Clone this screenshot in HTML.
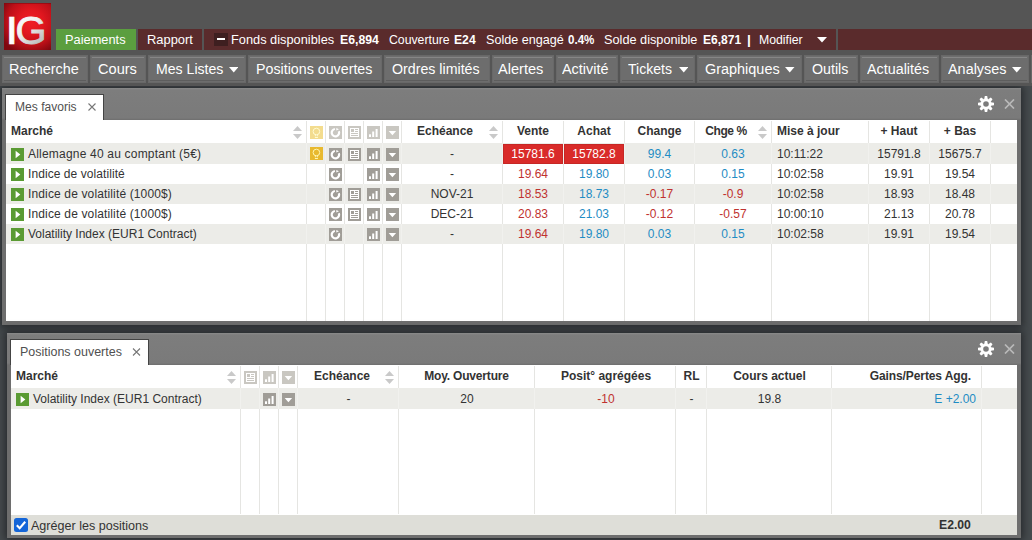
<!DOCTYPE html>
<html lang="fr">
<head>
<meta charset="utf-8">
<title>IG</title>
<style>
*{box-sizing:border-box;margin:0;padding:0}
html,body{width:1032px;height:540px;overflow:hidden}
body{position:relative;background:#464b4e;font-family:"Liberation Sans",Arial,sans-serif;font-size:12px;color:#333}
.abs{position:absolute}
#top{position:absolute;left:0;top:0;width:1032px;height:86px;background:#555;z-index:2}
#logo{position:absolute;left:4px;top:3px;width:47px;height:47px}
.acct{position:absolute;top:29px;height:21px;background:#5a2b2c;color:#fff;font-size:13px;line-height:21px;white-space:nowrap}
#pay{left:56px;width:80px;background:#5b9e3f;text-align:center}
#rap{left:138px;width:64px;text-align:center}
#funds{left:204px;width:632px}
#rest{left:838px;width:194px}
#funds span{position:absolute;top:0}
#funds b{font-weight:bold}
#minus{position:absolute;left:10px;top:4px;width:13.5px;height:13px;background:#3e1f20}
#minus i{position:absolute;left:3px;top:5px;width:8px;height:2px;background:#fff}
.nb{position:absolute;top:55px;height:28px;background:#6d6d6d;border:1px solid #686868}
.nb:before{content:"";position:absolute;left:1px;right:1px;top:1px;height:1px;background:#868686}
.nb:after{content:"";position:absolute;left:1px;right:1px;bottom:1px;height:1px;background:#5d5d5d}
.nb .ar{display:inline-block;width:0;height:0;border-left:5px solid transparent;border-right:5px solid transparent;border-top:5px solid #fff;margin-left:7px;vertical-align:2px}
.panel{position:absolute;background:linear-gradient(#8a8a8a 0,#7d7d7d 2px,#7a7a7a 30px,#6e6e6e 32px);box-shadow:0 0 8px 2px rgba(24,26,28,0.7)}
.tab{position:absolute;background:#fff;border:1px solid #444;border-bottom:none}
.tab .x{position:absolute;top:0;font-size:13px;color:#555}
.grid{position:absolute;background:#fff;overflow:hidden}
.row{position:absolute;left:0;right:0}
.alt{background:#ecece8}
.c{position:absolute;top:0;height:100%;white-space:nowrap;text-align:center;font-size:12px}
.vl{position:absolute;top:0;bottom:0;width:1px;background:#e5e5e2}
.vl2{position:absolute;top:0;bottom:0;width:1px;background:#f1f1ee}
.hd{font-weight:bold;color:#333}
.red{color:#c0322f}.blue{color:#1f8cc4}
.l{text-align:left}.r{text-align:right}
.ic{position:absolute;width:13px;height:13px}
.foot{position:absolute;left:0;right:0;background:#deded8}
</style>
</head>
<body>
<div id="top">
  <svg id="logo" viewBox="0 0 47 47">
    <defs>
      <radialGradient id="lg" cx="58%" cy="40%" r="72%">
        <stop offset="0" stop-color="#ef1d26"/><stop offset="0.35" stop-color="#e2171f"/><stop offset="0.7" stop-color="#bd1018"/><stop offset="1" stop-color="#7e070e"/>
      </radialGradient>
      <linearGradient id="lt" x1="0" y1="0" x2="0.6" y2="1"><stop offset="0" stop-color="#ffffff"/><stop offset="0.5" stop-color="#f0f0f0"/><stop offset="1" stop-color="#b4b4b4"/></linearGradient>
      <linearGradient id="li" x1="0" y1="0" x2="1" y2="0"><stop offset="0" stop-color="#c4c4c4"/><stop offset="0.3" stop-color="#ffffff"/><stop offset="1" stop-color="#f4f4f4"/></linearGradient>
    </defs>
    <rect width="47" height="47" fill="url(#lg)"/>
    <rect width="47" height="1" fill="#84080f" opacity="0.6"/>
    <text x="0" y="0" transform="translate(0.9 41.1) scale(1.25 1)" font-family="Liberation Sans, Arial, sans-serif" font-size="39" fill="url(#li)" stroke="url(#li)" stroke-width="0.4">I</text>
    <text x="0" y="0" transform="translate(11.5 41.1) scale(1.02 1)" font-family="Liberation Sans, Arial, sans-serif" font-size="39" fill="url(#lt)" stroke="url(#lt)" stroke-width="0.9">G</text>
  </svg>
<div class="acct" id="pay"><span style="position:absolute;left:9.40px;top:0px;line-height:21px;font-size:13px;font-weight:normal;white-space:pre;transform-origin:0 50%;transform:scaleX(0.9866);color:#fff;">Paiements</span></div>
<div class="acct" id="rap"><span style="position:absolute;left:9.30px;top:0px;line-height:21px;font-size:13px;font-weight:normal;white-space:pre;transform-origin:0 50%;transform:scaleX(0.9924);color:#fff;">Rapport</span></div>
<div class="acct" id="funds"><div id="minus"><i></i></div><span style="position:absolute;left:27.30px;top:0px;line-height:21px;font-size:13px;font-weight:normal;white-space:pre;transform-origin:0 50%;transform:scaleX(0.9843);color:#fff;">Fonds disponibles</span><span style="position:absolute;left:135.80px;top:0px;line-height:21px;font-size:13px;font-weight:bold;white-space:pre;transform-origin:0 50%;transform:scaleX(0.9441);color:#fff;">E6,894</span><span style="position:absolute;left:184.80px;top:0px;line-height:21px;font-size:13px;font-weight:normal;white-space:pre;transform-origin:0 50%;transform:scaleX(0.9431);color:#fff;">Couverture</span><span style="position:absolute;left:249.55px;top:0px;line-height:21px;font-size:13px;font-weight:bold;white-space:pre;transform-origin:0 50%;transform:scaleX(0.9356);color:#fff;">E24</span><span style="position:absolute;left:281.55px;top:0px;line-height:21px;font-size:13px;font-weight:normal;white-space:pre;transform-origin:0 50%;transform:scaleX(0.9676);color:#fff;">Solde engagé</span><span style="position:absolute;left:364.05px;top:0px;line-height:21px;font-size:13px;font-weight:bold;white-space:pre;transform-origin:0 50%;transform:scaleX(0.8907);color:#fff;">0.4%</span><span style="position:absolute;left:400.30px;top:0px;line-height:21px;font-size:13px;font-weight:normal;white-space:pre;transform-origin:0 50%;transform:scaleX(0.9790);color:#fff;">Solde disponible</span><span style="position:absolute;left:498.55px;top:0px;line-height:21px;font-size:13px;font-weight:bold;white-space:pre;transform-origin:0 50%;transform:scaleX(0.9259);color:#fff;">E6,871</span><span style="position:absolute;left:543.30px;top:0px;line-height:21px;font-size:13px;font-weight:bold;white-space:pre;transform-origin:0 50%;transform:scaleX(1.0712);color:#fff;">|</span><span style="position:absolute;left:554.55px;top:0px;line-height:21px;font-size:13px;font-weight:normal;white-space:pre;transform-origin:0 50%;transform:scaleX(0.9438);color:#fff;">Modifier</span><svg class="abs" style="left:612.5px;top:8px;width:10px;height:6px" viewBox="0 0 10 6"><path d="M0 0H10L5 5.5Z" fill="#fff"/></svg></div>
<div class="acct" id="rest"></div>
<div class="nb" style="left:2px;width:86px"><span style="position:absolute;left:5.80px;top:-1px;line-height:28px;font-size:14px;font-weight:normal;white-space:pre;transform-origin:0 50%;transform:scaleX(1.0324);color:#fff;">Recherche</span></div>
<div class="nb" style="left:90px;width:56px"><span style="position:absolute;left:6.55px;top:-1px;line-height:28px;font-size:14px;font-weight:normal;white-space:pre;transform-origin:0 50%;transform:scaleX(1.0412);color:#fff;">Cours</span></div>
<div class="nb" style="left:148px;width:98px"><span style="position:absolute;left:6.80px;top:-1px;line-height:28px;font-size:14px;font-weight:normal;white-space:pre;transform-origin:0 50%;transform:scaleX(1.0071);color:#fff;">Mes Listes</span><svg class="abs" style="left:79.75px;top:11px;width:9.5px;height:5.5px" viewBox="0 0 9.5 5.5"><path d="M0 0H9.5L4.75 5.5Z" fill="#fff"/></svg></div>
<div class="nb" style="left:248px;width:134px"><span style="position:absolute;left:6.80px;top:-1px;line-height:28px;font-size:14px;font-weight:normal;white-space:pre;transform-origin:0 50%;transform:scaleX(1.0174);color:#fff;">Positions ouvertes</span></div>
<div class="nb" style="left:384px;width:106px"><span style="position:absolute;left:7.05px;top:-1px;line-height:28px;font-size:14px;font-weight:normal;white-space:pre;transform-origin:0 50%;transform:scaleX(1.0149);color:#fff;">Ordres limités</span></div>
<div class="nb" style="left:492px;width:62px"><span style="position:absolute;left:5.30px;top:-1px;line-height:28px;font-size:14px;font-weight:normal;white-space:pre;transform-origin:0 50%;transform:scaleX(1.0418);color:#fff;">Alertes</span></div>
<div class="nb" style="left:556px;width:62px"><span style="position:absolute;left:5.30px;top:-1px;line-height:28px;font-size:14px;font-weight:normal;white-space:pre;transform-origin:0 50%;transform:scaleX(1.0283);color:#fff;">Activité</span></div>
<div class="nb" style="left:620px;width:75px"><span style="position:absolute;left:7.30px;top:-1px;line-height:28px;font-size:14px;font-weight:normal;white-space:pre;transform-origin:0 50%;transform:scaleX(1.0016);color:#fff;">Tickets</span><svg class="abs" style="left:57.5px;top:11px;width:9.5px;height:5.5px" viewBox="0 0 9.5 5.5"><path d="M0 0H9.5L4.75 5.5Z" fill="#fff"/></svg></div>
<div class="nb" style="left:697px;width:105px"><span style="position:absolute;left:6.80px;top:-1px;line-height:28px;font-size:14px;font-weight:normal;white-space:pre;transform-origin:0 50%;transform:scaleX(1.0312);color:#fff;">Graphiques</span><svg class="abs" style="left:87px;top:11px;width:9.5px;height:5.5px" viewBox="0 0 9.5 5.5"><path d="M0 0H9.5L4.75 5.5Z" fill="#fff"/></svg></div>
<div class="nb" style="left:804px;width:54px"><span style="position:absolute;left:6.80px;top:-1px;line-height:28px;font-size:14px;font-weight:normal;white-space:pre;transform-origin:0 50%;transform:scaleX(1.0168);color:#fff;">Outils</span></div>
<div class="nb" style="left:860px;width:79px"><span style="position:absolute;left:6.30px;top:-1px;line-height:28px;font-size:14px;font-weight:normal;white-space:pre;transform-origin:0 50%;transform:scaleX(1.0238);color:#fff;">Actualités</span></div>
<div class="nb" style="left:941px;width:88px"><span style="position:absolute;left:6.20px;top:-1px;line-height:28px;font-size:14px;font-weight:normal;white-space:pre;transform-origin:0 50%;transform:scaleX(1.0297);color:#fff;">Analyses</span><svg class="abs" style="left:70.20000000000005px;top:11px;width:9.5px;height:5.5px" viewBox="0 0 9.5 5.5"><path d="M0 0H9.5L4.75 5.5Z" fill="#fff"/></svg></div>
<div class="nb" style="left:1031px;width:19px"></div>
</div>

<!-- PANEL 1 -->
<div class="panel" id="p1" style="left:2px;top:88px;width:1019px;height:237px">
  <div class="tab" style="left:3px;top:6px;width:99px;height:26px"><span style="position:absolute;left:8.80px;top:0px;line-height:24px;font-size:12px;font-weight:normal;white-space:pre;transform-origin:0 50%;transform:scaleX(1.0047);color:#505050;">Mes favoris</span><svg class="abs" style="left:82px;top:8px;width:9px;height:8px" viewBox="0 0 9 8"><path d="M0.5 0.5L7.5 7.5M7.5 0.5L0.5 7.5" stroke="#777" stroke-width="1.1" fill="none"/></svg></div><svg class="abs" style="left:976px;top:8px;width:16px;height:16px" viewBox="-8 -8 16 16"><g fill="#fff"><path d="M-1.8 -4.8L-1.2 -8H1.2L1.8 -4.8Z" transform="rotate(0)"/><path d="M-1.8 -4.8L-1.2 -8H1.2L1.8 -4.8Z" transform="rotate(45)"/><path d="M-1.8 -4.8L-1.2 -8H1.2L1.8 -4.8Z" transform="rotate(90)"/><path d="M-1.8 -4.8L-1.2 -8H1.2L1.8 -4.8Z" transform="rotate(135)"/><path d="M-1.8 -4.8L-1.2 -8H1.2L1.8 -4.8Z" transform="rotate(180)"/><path d="M-1.8 -4.8L-1.2 -8H1.2L1.8 -4.8Z" transform="rotate(225)"/><path d="M-1.8 -4.8L-1.2 -8H1.2L1.8 -4.8Z" transform="rotate(270)"/><path d="M-1.8 -4.8L-1.2 -8H1.2L1.8 -4.8Z" transform="rotate(315)"/></g><circle r="4.1" fill="none" stroke="#fff" stroke-width="2.6"/></svg><svg class="abs" style="left:1002px;top:11px;width:11px;height:10px" viewBox="0 0 11 10"><path d="M1.0 0.5L10.0 9.5M10.0 0.5L1.0 9.5" stroke="#b9b9b9" stroke-width="1.7" fill="none"/></svg>
  <div class="grid" id="g1" style="left:4px;top:32px;width:1011px;height:201px">
<div class="vl" style="left:300px;top:1px"></div>
<div class="vl" style="left:319px;top:1px"></div>
<div class="vl" style="left:338px;top:1px"></div>
<div class="vl" style="left:357px;top:1px"></div>
<div class="vl" style="left:376px;top:1px"></div>
<div class="vl" style="left:395px;top:1px"></div>
<div class="vl" style="left:496px;top:1px"></div>
<div class="vl" style="left:557px;top:1px"></div>
<div class="vl" style="left:618px;top:1px"></div>
<div class="vl" style="left:688px;top:1px"></div>
<div class="vl" style="left:765px;top:1px"></div>
<div class="vl" style="left:862px;top:1px"></div>
<div class="vl" style="left:923px;top:1px"></div>
<div class="vl" style="left:984px;top:1px"></div>
<div class="row" style="top:0;height:23px"><div class="c hd l" style="left:0px;width:300px;line-height:23px;padding-left:5px;">Marché</div><svg class="abs" style="left:287px;top:6px;width:9px;height:13px" viewBox="0 0 9 13"><path d="M0 5L4.5 0L9 5Z" fill="#c9c9c9"/><path d="M0 8L4.5 13L9 8Z" fill="#c9c9c9"/></svg><svg class="ic" style="left:304px;top:6px" viewBox="0 0 13 13"><rect width="13" height="13" fill="#f3dc8e"/><circle cx="6.4" cy="5.5" r="3.3" fill="none" stroke="#fffbd2" stroke-width="1"/><path d="M5.4 8.4v1.9M7.4 8.4v1.9" stroke="#fffbd2" stroke-width="0.9" fill="none"/><rect x="4.9" y="11" width="3" height="1" fill="#fffbd2"/></svg><svg class="ic" style="left:323px;top:6px" viewBox="0 0 13 13"><rect width="13" height="13" fill="#c9c7c1"/><path d="M5.9 3.0A3.7 3.7 0 1 0 9.8 5.2" fill="none" stroke="#fff" stroke-width="2.2"/><path d="M7.3 1.9L10 3.2L7.3 4.6Z" fill="#fff"/></svg><svg class="ic" style="left:342px;top:6px" viewBox="0 0 13 13"><rect width="13" height="13" fill="#c9c7c1"/><rect x="2" y="2" width="9" height="9" fill="#fff"/><rect x="3" y="3" width="3" height="3" fill="#c9c7c1"/><rect x="7" y="3" width="3" height="1" fill="#c9c7c1"/><rect x="7" y="5" width="3" height="1" fill="#c9c7c1"/><rect x="3" y="7" width="7" height="1" fill="#c9c7c1"/><rect x="3" y="9" width="7" height="1" fill="#c9c7c1"/></svg><svg class="ic" style="left:361px;top:6px" viewBox="0 0 13 13"><rect width="13" height="13" fill="#c9c7c1"/><rect x="2" y="8.3" width="2" height="2.7" fill="#fff"/><rect x="5.2" y="5.5" width="2" height="5.5" fill="#fff"/><rect x="8.6" y="3" width="2" height="8" fill="#fff"/></svg><svg class="ic" style="left:380px;top:6px" viewBox="0 0 13 13"><rect width="13" height="13" fill="#c9c7c1"/><path d="M2.7 5H10.1L6.4 9.3Z" fill="#fff"/></svg><div class="c hd" style="left:396px;width:86px;line-height:23px;">Echéance</div><svg class="abs" style="left:483px;top:6px;width:9px;height:13px" viewBox="0 0 9 13"><path d="M0 5L4.5 0L9 5Z" fill="#c9c9c9"/><path d="M0 8L4.5 13L9 8Z" fill="#c9c9c9"/></svg><div class="c hd" style="left:497px;width:60px;line-height:23px;">Vente</div><div class="c hd" style="left:558px;width:60px;line-height:23px;">Achat</div><div class="c hd" style="left:619px;width:69px;line-height:23px;">Change</div><div class="c hd" style="left:689px;width:62px;line-height:23px;letter-spacing:-0.4px;">Chge %</div><svg class="abs" style="left:752px;top:6px;width:9px;height:13px" viewBox="0 0 9 13"><path d="M0 5L4.5 0L9 5Z" fill="#c9c9c9"/><path d="M0 8L4.5 13L9 8Z" fill="#c9c9c9"/></svg><div class="c hd l" style="left:766px;width:96px;line-height:23px;padding-left:5px;">Mise à jour</div><div class="c hd" style="left:863px;width:60px;line-height:23px;">+ Haut</div><div class="c hd" style="left:924px;width:60px;line-height:23px;">+ Bas</div></div>
<div class="row alt" style="top:23px;height:21px"><i class="vl2" style="left:300px"></i><i class="vl2" style="left:319px"></i><i class="vl2" style="left:338px"></i><i class="vl2" style="left:357px"></i><i class="vl2" style="left:376px"></i><i class="vl2" style="left:395px"></i><i class="vl2" style="left:496px"></i><i class="vl2" style="left:557px"></i><i class="vl2" style="left:618px"></i><i class="vl2" style="left:688px"></i><i class="vl2" style="left:765px"></i><i class="vl2" style="left:862px"></i><i class="vl2" style="left:923px"></i><i class="vl2" style="left:984px"></i><svg class="ic" style="left:5px;top:5px" viewBox="0 0 13 13"><rect width="13" height="13" fill="#5a9b33"/><path d="M4.6 2.8V10.2L9.3 6.5Z" fill="#fff"/></svg><div class="c l" style="left:0px;width:300px;line-height:20px;padding-left:22px;top:1px;height:20px;letter-spacing:0.2px;">Allemagne 40 au comptant (5€)</div><svg class="ic" style="left:304px;top:4px" viewBox="0 0 13 13"><rect width="13" height="13" fill="#e8b92f"/><circle cx="6.4" cy="5.5" r="3.3" fill="none" stroke="#fff6b0" stroke-width="1"/><path d="M5.4 8.4v1.9M7.4 8.4v1.9" stroke="#fff6b0" stroke-width="0.9" fill="none"/><rect x="4.9" y="11" width="3" height="1" fill="#fff6b0"/></svg><svg class="ic" style="left:323px;top:5px" viewBox="0 0 13 13"><rect width="13" height="13" fill="#a09d97"/><path d="M5.9 3.0A3.7 3.7 0 1 0 9.8 5.2" fill="none" stroke="#fff" stroke-width="2.2"/><path d="M7.3 1.9L10 3.2L7.3 4.6Z" fill="#fff"/></svg><svg class="ic" style="left:342px;top:5px" viewBox="0 0 13 13"><rect width="13" height="13" fill="#a09d97"/><rect x="2" y="2" width="9" height="9" fill="#fff"/><rect x="3" y="3" width="3" height="3" fill="#a09d97"/><rect x="7" y="3" width="3" height="1" fill="#a09d97"/><rect x="7" y="5" width="3" height="1" fill="#a09d97"/><rect x="3" y="7" width="7" height="1" fill="#a09d97"/><rect x="3" y="9" width="7" height="1" fill="#a09d97"/></svg><svg class="ic" style="left:361px;top:5px" viewBox="0 0 13 13"><rect width="13" height="13" fill="#a09d97"/><rect x="2" y="8.3" width="2" height="2.7" fill="#fff"/><rect x="5.2" y="5.5" width="2" height="5.5" fill="#fff"/><rect x="8.6" y="3" width="2" height="8" fill="#fff"/></svg><svg class="ic" style="left:380px;top:5px" viewBox="0 0 13 13"><rect width="13" height="13" fill="#a09d97"/><path d="M2.7 5H10.1L6.4 9.3Z" fill="#fff"/></svg><div class="c " style="left:396px;width:100px;line-height:20px;top:1px;height:20px;">-</div><div class="c " style="left:497px;width:60px;line-height:20px;top:1px;height:20px;background:#d92b29;box-shadow:inset 0 0 0 1px #c62725;color:#fff;">15781.6</div><div class="c " style="left:558px;width:60px;line-height:20px;top:1px;height:20px;background:#d92b29;box-shadow:inset 0 0 0 1px #c62725;color:#fff;">15782.8</div><div class="c blue" style="left:619px;width:69px;line-height:20px;top:1px;height:20px;">99.4</div><div class="c blue" style="left:689px;width:76px;line-height:20px;top:1px;height:20px;">0.63</div><div class="c l" style="left:766px;width:96px;line-height:20px;padding-left:5px;top:1px;height:20px;">10:11:22</div><div class="c " style="left:863px;width:60px;line-height:20px;top:1px;height:20px;">15791.8</div><div class="c " style="left:924px;width:60px;line-height:20px;top:1px;height:20px;">15675.7</div></div>
<div class="row" style="top:44px;height:20px"><svg class="ic" style="left:5px;top:4px" viewBox="0 0 13 13"><rect width="13" height="13" fill="#5a9b33"/><path d="M4.6 2.8V10.2L9.3 6.5Z" fill="#fff"/></svg><div class="c l" style="left:0px;width:300px;line-height:20px;padding-left:22px;top:0px;height:20px;letter-spacing:0.07px;">Indice de volatilité</div><svg class="ic" style="left:323px;top:4px" viewBox="0 0 13 13"><rect width="13" height="13" fill="#a09d97"/><path d="M5.9 3.0A3.7 3.7 0 1 0 9.8 5.2" fill="none" stroke="#fff" stroke-width="2.2"/><path d="M7.3 1.9L10 3.2L7.3 4.6Z" fill="#fff"/></svg><svg class="ic" style="left:361px;top:4px" viewBox="0 0 13 13"><rect width="13" height="13" fill="#a09d97"/><rect x="2" y="8.3" width="2" height="2.7" fill="#fff"/><rect x="5.2" y="5.5" width="2" height="5.5" fill="#fff"/><rect x="8.6" y="3" width="2" height="8" fill="#fff"/></svg><svg class="ic" style="left:380px;top:4px" viewBox="0 0 13 13"><rect width="13" height="13" fill="#a09d97"/><path d="M2.7 5H10.1L6.4 9.3Z" fill="#fff"/></svg><div class="c " style="left:396px;width:100px;line-height:20px;top:0px;height:20px;">-</div><div class="c red" style="left:497px;width:60px;line-height:20px;top:0px;height:20px;">19.64</div><div class="c blue" style="left:558px;width:60px;line-height:20px;top:0px;height:20px;">19.80</div><div class="c blue" style="left:619px;width:69px;line-height:20px;top:0px;height:20px;">0.03</div><div class="c blue" style="left:689px;width:76px;line-height:20px;top:0px;height:20px;">0.15</div><div class="c l" style="left:766px;width:96px;line-height:20px;padding-left:5px;top:0px;height:20px;">10:02:58</div><div class="c " style="left:863px;width:60px;line-height:20px;top:0px;height:20px;">19.91</div><div class="c " style="left:924px;width:60px;line-height:20px;top:0px;height:20px;">19.54</div></div>
<div class="row alt" style="top:64px;height:20px"><i class="vl2" style="left:300px"></i><i class="vl2" style="left:319px"></i><i class="vl2" style="left:338px"></i><i class="vl2" style="left:357px"></i><i class="vl2" style="left:376px"></i><i class="vl2" style="left:395px"></i><i class="vl2" style="left:496px"></i><i class="vl2" style="left:557px"></i><i class="vl2" style="left:618px"></i><i class="vl2" style="left:688px"></i><i class="vl2" style="left:765px"></i><i class="vl2" style="left:862px"></i><i class="vl2" style="left:923px"></i><i class="vl2" style="left:984px"></i><svg class="ic" style="left:5px;top:4px" viewBox="0 0 13 13"><rect width="13" height="13" fill="#5a9b33"/><path d="M4.6 2.8V10.2L9.3 6.5Z" fill="#fff"/></svg><div class="c l" style="left:0px;width:300px;line-height:20px;padding-left:22px;top:0px;height:20px;letter-spacing:0.14px;">Indice de volatilité (1000$)</div><svg class="ic" style="left:323px;top:4px" viewBox="0 0 13 13"><rect width="13" height="13" fill="#a09d97"/><path d="M5.9 3.0A3.7 3.7 0 1 0 9.8 5.2" fill="none" stroke="#fff" stroke-width="2.2"/><path d="M7.3 1.9L10 3.2L7.3 4.6Z" fill="#fff"/></svg><svg class="ic" style="left:342px;top:4px" viewBox="0 0 13 13"><rect width="13" height="13" fill="#a09d97"/><rect x="2" y="2" width="9" height="9" fill="#fff"/><rect x="3" y="3" width="3" height="3" fill="#a09d97"/><rect x="7" y="3" width="3" height="1" fill="#a09d97"/><rect x="7" y="5" width="3" height="1" fill="#a09d97"/><rect x="3" y="7" width="7" height="1" fill="#a09d97"/><rect x="3" y="9" width="7" height="1" fill="#a09d97"/></svg><svg class="ic" style="left:361px;top:4px" viewBox="0 0 13 13"><rect width="13" height="13" fill="#a09d97"/><rect x="2" y="8.3" width="2" height="2.7" fill="#fff"/><rect x="5.2" y="5.5" width="2" height="5.5" fill="#fff"/><rect x="8.6" y="3" width="2" height="8" fill="#fff"/></svg><svg class="ic" style="left:380px;top:4px" viewBox="0 0 13 13"><rect width="13" height="13" fill="#a09d97"/><path d="M2.7 5H10.1L6.4 9.3Z" fill="#fff"/></svg><div class="c " style="left:396px;width:100px;line-height:20px;top:0px;height:20px;">NOV-21</div><div class="c red" style="left:497px;width:60px;line-height:20px;top:0px;height:20px;">18.53</div><div class="c blue" style="left:558px;width:60px;line-height:20px;top:0px;height:20px;">18.73</div><div class="c red" style="left:619px;width:69px;line-height:20px;top:0px;height:20px;">-0.17</div><div class="c red" style="left:689px;width:76px;line-height:20px;top:0px;height:20px;">-0.9</div><div class="c l" style="left:766px;width:96px;line-height:20px;padding-left:5px;top:0px;height:20px;">10:02:58</div><div class="c " style="left:863px;width:60px;line-height:20px;top:0px;height:20px;">18.93</div><div class="c " style="left:924px;width:60px;line-height:20px;top:0px;height:20px;">18.48</div></div>
<div class="row" style="top:84px;height:20px"><svg class="ic" style="left:5px;top:4px" viewBox="0 0 13 13"><rect width="13" height="13" fill="#5a9b33"/><path d="M4.6 2.8V10.2L9.3 6.5Z" fill="#fff"/></svg><div class="c l" style="left:0px;width:300px;line-height:20px;padding-left:22px;top:0px;height:20px;letter-spacing:0.14px;">Indice de volatilité (1000$)</div><svg class="ic" style="left:323px;top:4px" viewBox="0 0 13 13"><rect width="13" height="13" fill="#a09d97"/><path d="M5.9 3.0A3.7 3.7 0 1 0 9.8 5.2" fill="none" stroke="#fff" stroke-width="2.2"/><path d="M7.3 1.9L10 3.2L7.3 4.6Z" fill="#fff"/></svg><svg class="ic" style="left:342px;top:4px" viewBox="0 0 13 13"><rect width="13" height="13" fill="#a09d97"/><rect x="2" y="2" width="9" height="9" fill="#fff"/><rect x="3" y="3" width="3" height="3" fill="#a09d97"/><rect x="7" y="3" width="3" height="1" fill="#a09d97"/><rect x="7" y="5" width="3" height="1" fill="#a09d97"/><rect x="3" y="7" width="7" height="1" fill="#a09d97"/><rect x="3" y="9" width="7" height="1" fill="#a09d97"/></svg><svg class="ic" style="left:361px;top:4px" viewBox="0 0 13 13"><rect width="13" height="13" fill="#a09d97"/><rect x="2" y="8.3" width="2" height="2.7" fill="#fff"/><rect x="5.2" y="5.5" width="2" height="5.5" fill="#fff"/><rect x="8.6" y="3" width="2" height="8" fill="#fff"/></svg><svg class="ic" style="left:380px;top:4px" viewBox="0 0 13 13"><rect width="13" height="13" fill="#a09d97"/><path d="M2.7 5H10.1L6.4 9.3Z" fill="#fff"/></svg><div class="c " style="left:396px;width:100px;line-height:20px;top:0px;height:20px;">DEC-21</div><div class="c red" style="left:497px;width:60px;line-height:20px;top:0px;height:20px;">20.83</div><div class="c blue" style="left:558px;width:60px;line-height:20px;top:0px;height:20px;">21.03</div><div class="c red" style="left:619px;width:69px;line-height:20px;top:0px;height:20px;">-0.12</div><div class="c red" style="left:689px;width:76px;line-height:20px;top:0px;height:20px;">-0.57</div><div class="c l" style="left:766px;width:96px;line-height:20px;padding-left:5px;top:0px;height:20px;">10:00:10</div><div class="c " style="left:863px;width:60px;line-height:20px;top:0px;height:20px;">21.13</div><div class="c " style="left:924px;width:60px;line-height:20px;top:0px;height:20px;">20.78</div></div>
<div class="row alt" style="top:104px;height:20px"><i class="vl2" style="left:300px"></i><i class="vl2" style="left:319px"></i><i class="vl2" style="left:338px"></i><i class="vl2" style="left:357px"></i><i class="vl2" style="left:376px"></i><i class="vl2" style="left:395px"></i><i class="vl2" style="left:496px"></i><i class="vl2" style="left:557px"></i><i class="vl2" style="left:618px"></i><i class="vl2" style="left:688px"></i><i class="vl2" style="left:765px"></i><i class="vl2" style="left:862px"></i><i class="vl2" style="left:923px"></i><i class="vl2" style="left:984px"></i><svg class="ic" style="left:5px;top:4px" viewBox="0 0 13 13"><rect width="13" height="13" fill="#5a9b33"/><path d="M4.6 2.8V10.2L9.3 6.5Z" fill="#fff"/></svg><div class="c l" style="left:0px;width:300px;line-height:20px;padding-left:22px;top:0px;height:20px;letter-spacing:0px;">Volatility Index (EUR1 Contract)</div><svg class="ic" style="left:323px;top:4px" viewBox="0 0 13 13"><rect width="13" height="13" fill="#a09d97"/><path d="M5.9 3.0A3.7 3.7 0 1 0 9.8 5.2" fill="none" stroke="#fff" stroke-width="2.2"/><path d="M7.3 1.9L10 3.2L7.3 4.6Z" fill="#fff"/></svg><svg class="ic" style="left:361px;top:4px" viewBox="0 0 13 13"><rect width="13" height="13" fill="#a09d97"/><rect x="2" y="8.3" width="2" height="2.7" fill="#fff"/><rect x="5.2" y="5.5" width="2" height="5.5" fill="#fff"/><rect x="8.6" y="3" width="2" height="8" fill="#fff"/></svg><svg class="ic" style="left:380px;top:4px" viewBox="0 0 13 13"><rect width="13" height="13" fill="#a09d97"/><path d="M2.7 5H10.1L6.4 9.3Z" fill="#fff"/></svg><div class="c " style="left:396px;width:100px;line-height:20px;top:0px;height:20px;">-</div><div class="c red" style="left:497px;width:60px;line-height:20px;top:0px;height:20px;">19.64</div><div class="c blue" style="left:558px;width:60px;line-height:20px;top:0px;height:20px;">19.80</div><div class="c blue" style="left:619px;width:69px;line-height:20px;top:0px;height:20px;">0.03</div><div class="c blue" style="left:689px;width:76px;line-height:20px;top:0px;height:20px;">0.15</div><div class="c l" style="left:766px;width:96px;line-height:20px;padding-left:5px;top:0px;height:20px;">10:02:58</div><div class="c " style="left:863px;width:60px;line-height:20px;top:0px;height:20px;">19.91</div><div class="c " style="left:924px;width:60px;line-height:20px;top:0px;height:20px;">19.54</div></div>
</div>
</div>

<!-- PANEL 2 -->
<div class="panel" id="p2" style="left:7px;top:333px;width:1014px;height:205px">
  <div class="tab" style="left:3px;top:6px;width:139px;height:26px"><span style="position:absolute;left:8.80px;top:0px;line-height:24px;font-size:12px;font-weight:normal;white-space:pre;transform-origin:0 50%;transform:scaleX(1.0391);color:#505050;">Positions ouvertes</span><svg class="abs" style="left:121px;top:8px;width:9px;height:8px" viewBox="0 0 9 8"><path d="M1.0 0.5L8.0 7.5M8.0 0.5L1.0 7.5" stroke="#777" stroke-width="1.1" fill="none"/></svg></div><svg class="abs" style="left:971px;top:8px;width:16px;height:16px" viewBox="-8 -8 16 16"><g fill="#fff"><path d="M-1.8 -4.8L-1.2 -8H1.2L1.8 -4.8Z" transform="rotate(0)"/><path d="M-1.8 -4.8L-1.2 -8H1.2L1.8 -4.8Z" transform="rotate(45)"/><path d="M-1.8 -4.8L-1.2 -8H1.2L1.8 -4.8Z" transform="rotate(90)"/><path d="M-1.8 -4.8L-1.2 -8H1.2L1.8 -4.8Z" transform="rotate(135)"/><path d="M-1.8 -4.8L-1.2 -8H1.2L1.8 -4.8Z" transform="rotate(180)"/><path d="M-1.8 -4.8L-1.2 -8H1.2L1.8 -4.8Z" transform="rotate(225)"/><path d="M-1.8 -4.8L-1.2 -8H1.2L1.8 -4.8Z" transform="rotate(270)"/><path d="M-1.8 -4.8L-1.2 -8H1.2L1.8 -4.8Z" transform="rotate(315)"/></g><circle r="4.1" fill="none" stroke="#fff" stroke-width="2.6"/></svg><svg class="abs" style="left:997px;top:11px;width:11px;height:10px" viewBox="0 0 11 10"><path d="M1.0 0.5L10.0 9.5M10.0 0.5L1.0 9.5" stroke="#b9b9b9" stroke-width="1.7" fill="none"/></svg>
  <div class="grid" id="g2" style="left:4px;top:32px;width:1006px;height:170px">
<div class="vl" style="left:229px;top:1px;bottom:21px"></div>
<div class="vl" style="left:248px;top:1px;bottom:21px"></div>
<div class="vl" style="left:267px;top:1px;bottom:21px"></div>
<div class="vl" style="left:286px;top:1px;bottom:21px"></div>
<div class="vl" style="left:387px;top:1px;bottom:21px"></div>
<div class="vl" style="left:523px;top:1px;bottom:21px"></div>
<div class="vl" style="left:664px;top:1px;bottom:21px"></div>
<div class="vl" style="left:695px;top:1px;bottom:21px"></div>
<div class="vl" style="left:820px;top:1px;bottom:21px"></div>
<div class="vl" style="left:970px;top:1px;bottom:21px"></div>
<div class="row" style="top:0;height:23px"><div class="c hd l" style="left:0px;width:230px;line-height:23px;padding-left:5px;">Marché</div><svg class="abs" style="left:216px;top:6px;width:9px;height:13px" viewBox="0 0 9 13"><path d="M0 5L4.5 0L9 5Z" fill="#c9c9c9"/><path d="M0 8L4.5 13L9 8Z" fill="#c9c9c9"/></svg><svg class="ic" style="left:233px;top:6px" viewBox="0 0 13 13"><rect width="13" height="13" fill="#c9c7c1"/><rect x="2" y="2" width="9" height="9" fill="#fff"/><rect x="3" y="3" width="3" height="3" fill="#c9c7c1"/><rect x="7" y="3" width="3" height="1" fill="#c9c7c1"/><rect x="7" y="5" width="3" height="1" fill="#c9c7c1"/><rect x="3" y="7" width="7" height="1" fill="#c9c7c1"/><rect x="3" y="9" width="7" height="1" fill="#c9c7c1"/></svg><svg class="ic" style="left:252px;top:6px" viewBox="0 0 13 13"><rect width="13" height="13" fill="#c9c7c1"/><rect x="2" y="8.3" width="2" height="2.7" fill="#fff"/><rect x="5.2" y="5.5" width="2" height="5.5" fill="#fff"/><rect x="8.6" y="3" width="2" height="8" fill="#fff"/></svg><svg class="ic" style="left:271px;top:6px" viewBox="0 0 13 13"><rect width="13" height="13" fill="#c9c7c1"/><path d="M2.7 5H10.1L6.4 9.3Z" fill="#fff"/></svg><div class="c hd" style="left:288px;width:86px;line-height:23px;">Echéance</div><svg class="abs" style="left:374px;top:6px;width:9px;height:13px" viewBox="0 0 9 13"><path d="M0 5L4.5 0L9 5Z" fill="#c9c9c9"/><path d="M0 8L4.5 13L9 8Z" fill="#c9c9c9"/></svg><div class="c hd" style="left:388px;width:135px;line-height:23px;letter-spacing:-0.18px;">Moy. Ouverture</div><div class="c hd" style="left:525px;width:140px;line-height:23px;">Posit° agrégées</div><div class="c hd" style="left:666px;width:29px;line-height:23px;">RL</div><div class="c hd" style="left:696px;width:125px;line-height:23px;">Cours actuel</div><div class="c hd r" style="left:822px;width:148px;line-height:23px;padding-right:10px;letter-spacing:-0.1px;">Gains/Pertes Agg.</div></div>
<div class="row alt" style="top:23px;height:21px"><i class="vl2" style="left:229px"></i><i class="vl2" style="left:248px"></i><i class="vl2" style="left:267px"></i><i class="vl2" style="left:286px"></i><i class="vl2" style="left:387px"></i><i class="vl2" style="left:523px"></i><i class="vl2" style="left:664px"></i><i class="vl2" style="left:695px"></i><i class="vl2" style="left:820px"></i><i class="vl2" style="left:970px"></i><svg class="ic" style="left:5px;top:5px" viewBox="0 0 13 13"><rect width="13" height="13" fill="#5a9b33"/><path d="M4.6 2.8V10.2L9.3 6.5Z" fill="#fff"/></svg><div class="c l" style="left:0px;width:230px;line-height:20px;padding-left:22px;top:1px;height:20px;">Volatility Index (EUR1 Contract)</div><svg class="ic" style="left:252px;top:5px" viewBox="0 0 13 13"><rect width="13" height="13" fill="#a09d97"/><rect x="2" y="8.3" width="2" height="2.7" fill="#fff"/><rect x="5.2" y="5.5" width="2" height="5.5" fill="#fff"/><rect x="8.6" y="3" width="2" height="8" fill="#fff"/></svg><svg class="ic" style="left:271px;top:5px" viewBox="0 0 13 13"><rect width="13" height="13" fill="#a09d97"/><path d="M2.7 5H10.1L6.4 9.3Z" fill="#fff"/></svg><div class="c " style="left:288px;width:99px;line-height:20px;top:1px;height:20px;">-</div><div class="c " style="left:388px;width:136px;line-height:20px;top:1px;height:20px;">20</div><div class="c red" style="left:525px;width:140px;line-height:20px;top:1px;height:20px;">-10</div><div class="c " style="left:666px;width:29px;line-height:20px;top:1px;height:20px;">-</div><div class="c " style="left:696px;width:125px;line-height:20px;top:1px;height:20px;">19.8</div><div class="c blue r" style="left:822px;width:148px;line-height:20px;padding-right:5px;top:1px;height:20px;">E +2.00</div></div>
<div class="foot" style="top:150px;height:20px"><svg class="abs" style="left:3px;top:3px;width:14px;height:14px" viewBox="0 0 14 14"><rect x="0" y="0" width="14" height="14" rx="2.5" fill="#1465d8"/><path d="M2.8 7.2L5.7 10.2L11.2 3.8" fill="none" stroke="#fff" stroke-width="2.1"/></svg><span style="position:absolute;left:19.50px;top:1px;line-height:20px;font-size:13px;font-weight:normal;white-space:pre;transform-origin:0 50%;transform:scaleX(0.9654);color:#333;">Agréger les positions</span><span style="position:absolute;left:927.50px;top:0px;line-height:20px;font-size:12px;font-weight:bold;white-space:pre;transform-origin:0 50%;transform:scaleX(1.0172);color:#333;">E2.00</span></div>
</div>
</div>
</body>
</html>
